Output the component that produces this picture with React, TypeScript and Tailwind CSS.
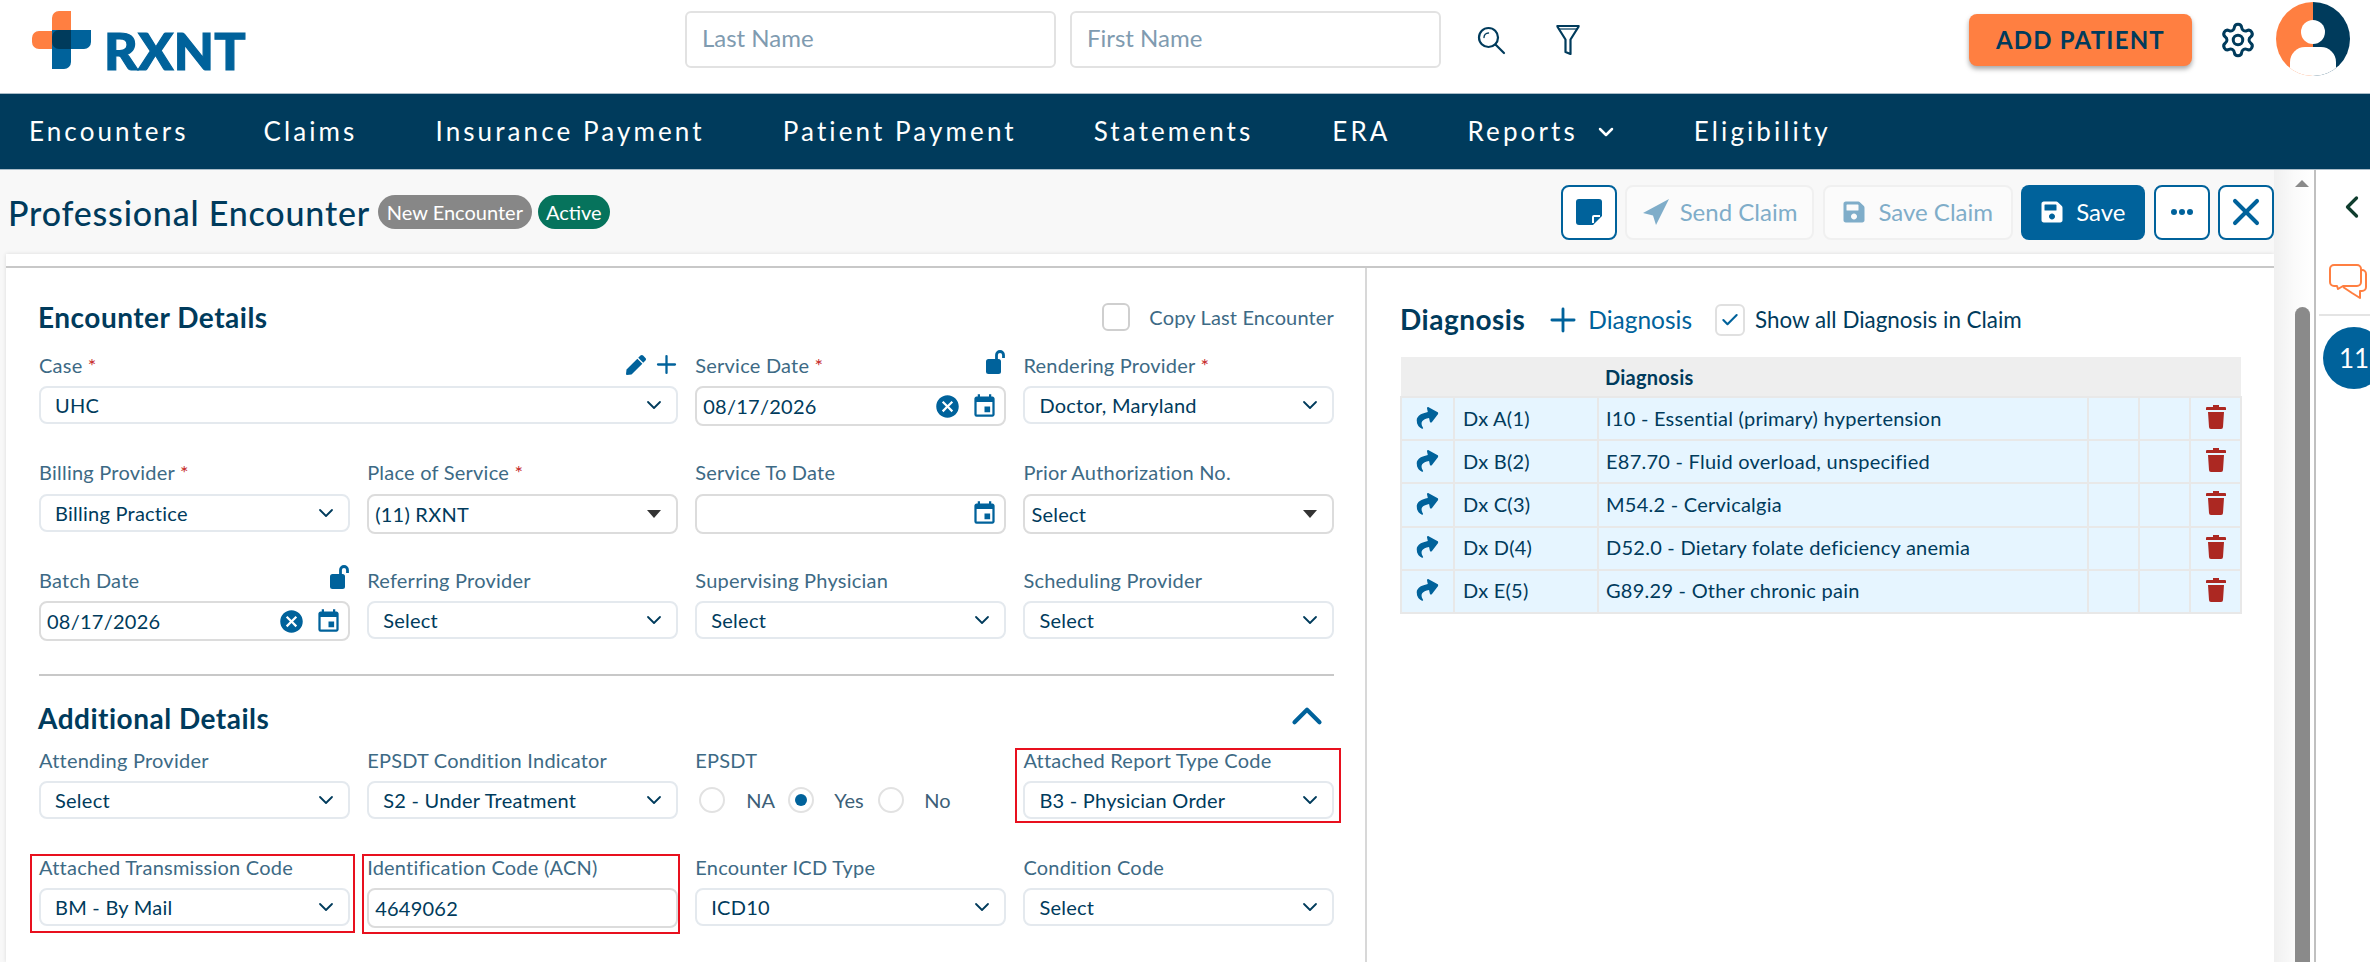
import React from "react";
import { ChevronDown, ChevronUp, ChevronLeft, Plus, X, Settings, Check } from "lucide-react";
import { FaPen, FaShare, FaSave } from "react-icons/fa";
import { MdCancel, MdEvent } from "react-icons/md";

const Logo = () => (
  <div className="flex items-end gap-[13px] h-[58px]">
    <svg width="59" height="58" viewBox="0 0 59 58" className="shrink-0">
      <path d="M27 0h12v38H7a7 7 0 0 1-7-7V27a7 7 0 0 1 7-7h13V7a7 7 0 0 1 7-7z" fill="#ff7f41" />
      <path d="M20 19h39v12a7 7 0 0 1-7 7H39v13a7 7 0 0 1-7 7H20z" fill="#00629b" />
      <path d="M27 19h12v19H27a7 7 0 0 1-7-7V26a7 7 0 0 1 7-7z" fill="#003b5c" />
    </svg>
    <span className="font-['Lato',sans-serif] font-black text-[52px] leading-[38px] h-[38px] text-[#00629b] tracking-[0.3px] [-webkit-text-stroke:1.2px_#00629b]">RXNT</span>
  </div>
);

const Avatar = () => (
  <svg width="74" height="74" viewBox="0 0 74 74">
    <defs>
      <clipPath id="av"><circle cx="37" cy="37" r="37" /></clipPath>
    </defs>
    <g clipPath="url(#av)">
      <rect width="37" height="74" fill="#ff7f41" />
      <rect x="37" width="37" height="74" fill="#003b5c" />
      <circle cx="37" cy="30" r="12" fill="#fff" />
      <path d="M14 74V60a15 15 0 0 1 15-15h16a15 15 0 0 1 15 15v14z" fill="#fff" />
    </g>
  </svg>
);

const SearchIcon = () => (
  <svg width="30" height="30" viewBox="0 0 30 30" fill="none" stroke="#003b5c" strokeWidth="2.2" strokeLinecap="round">
    <circle cx="12.5" cy="12.5" r="9.5" />
    <path d="M19.5 19.5L28 28" />
    <path d="M8 12.5a4.5 4.5 0 0 1 4.5-4.5" strokeWidth="1.4" />
  </svg>
);

const FilterIcon = () => (
  <svg width="26" height="31" viewBox="0 0 26 31" fill="none" stroke="#003b5c" strokeWidth="2.2" strokeLinejoin="round">
    <path d="M1.5 2h23M2 2l8.5 13.5V28l5 2V15.5L24 2" />
    <path d="M3.5 5h19" strokeWidth="1.2" />
  </svg>
);

const SendIcon = ({ c }: { c: string }) => (
  <svg width="28" height="28" viewBox="0 0 28 28">
    <path d="M27 1L1 15l10 2.5L14 27 z" fill={c} />
  </svg>
);

const NoteIcon = () => (
  <svg width="26" height="26" viewBox="0 0 26 26">
    <path d="M3 0h20a3 3 0 0 1 3 3v14l-9 9H3a3 3 0 0 1-3-3V3a3 3 0 0 1 3-3z" fill="#00629b" />
    <path d="M17 24v-6a1 1 0 0 1 1-1h6" fill="none" stroke="#fff" strokeWidth="2" />
  </svg>
);

const LockIcon = () => (
  <svg width="20" height="25" viewBox="0 0 20 25" className="-mt-[6px]">
    <rect x="0" y="10" width="15" height="15" rx="2.5" fill="#00629b" />
    <path d="M10.5 11V6a3.5 3.5 0 0 1 7 0v3" fill="none" stroke="#00629b" strokeWidth="2.8" />
  </svg>
);

const TrashIcon = () => (
  <svg width="20" height="24" viewBox="0 0 20 24" fill="#ac2822">
    <path d="M7 0h6v2h6a1 1 0 0 1 1 1v2H0V3a1 1 0 0 1 1-1h6z" />
    <path d="M2 7h16l-1 15a2 2 0 0 1-2 2H5a2 2 0 0 1-2-2z" />
  </svg>
);

const ChatIcon = () => (
  <svg width="38" height="35" viewBox="0 0 38 35" fill="none" stroke="#ff7f41" strokeWidth="2" strokeLinejoin="round">
    <path d="M5 1h23a4 4 0 0 1 4 4v13a4 4 0 0 1-4 4H14l-5 3-1-3H5a4 4 0 0 1-4-4V5a4 4 0 0 1 4-4z" />
    <path d="M32 6h1a4 4 0 0 1 4 4v13a4 4 0 0 1-4 4h-2v7l-8-5-9-6" />
  </svg>
);

type FieldProps = {
  label: string;
  req?: boolean;
  kind?: "select" | "native" | "date" | "text" | "radio";
  value?: string;
  clear?: boolean;
  span?: boolean;
  extra?: React.ReactNode;
  red?: string;
};

const Field = ({ label, req, kind = "select", value = "", clear, span, extra, red }: FieldProps) => {
  const hard = kind === "select" ? "h-[38px] border-[#e4e9ee] pl-[14px]" : "h-[40px] border-[#dcdcdc] pl-[6px]";
  return (
    <div className={`relative ${span ? "col-span-2" : ""}`}>
      {red && <div className={`absolute border-2 border-[#e8101e] pointer-events-none ${red}`} />}
      <div className="flex items-center justify-between h-[35px] pb-[8px]">
        <span className="text-[20px] text-[#3d6a85] tracking-[0.23px]">
          {label}
          {req && <span className="text-[#c62828]"> *</span>}
        </span>
        {extra}
      </div>
      {kind === "radio" ? (
        <div className="flex items-center h-[38px] pl-[4px] text-[20px] text-[#3d5f78]">
          <span className="w-[26px] h-[26px] rounded-full border-2 border-[#e2e2e2]" />
          <span className="ml-[21px] w-[42px]">NA</span>
          <span className="w-[26px] h-[26px] rounded-full border-2 border-[#e2e2e2] flex items-center justify-center">
            <span className="w-[12px] h-[12px] rounded-full bg-[#00629b]" />
          </span>
          <span className="ml-[20px] w-[44px]">Yes</span>
          <span className="w-[26px] h-[26px] rounded-full border-2 border-[#e2e2e2]" />
          <span className="ml-[20px]">No</span>
        </div>
      ) : (
        <div className={`flex items-center bg-white border-2 rounded-lg text-[20px] tracking-[0.25px] text-[#003b5c] pr-[10px] ${hard}`}>
          <span className="flex-1 truncate">{value}</span>
          {kind === "select" && <ChevronDown size={24} strokeWidth={1.8} color="#003b5c" />}
          {kind === "native" && (
            <span className="mr-[5px] w-0 h-0 border-x-[7px] border-x-transparent border-t-[8px] border-t-[#333]" />
          )}
          {kind === "date" && (
            <span className="flex items-center gap-[10px] -mr-[4px]">
              {clear && <MdCancel size={27} color="#00629b" />}
              <MdEvent size={27} color="#00629b" />
            </span>
          )}
        </div>
      )}
    </div>
  );
};

const dx = [
  ["Dx A(1)", "I10 - Essential (primary) hypertension"],
  ["Dx B(2)", "E87.70 - Fluid overload, unspecified"],
  ["Dx C(3)", "M54.2 - Cervicalgia"],
  ["Dx D(4)", "D52.0 - Dietary folate deficiency anemia"],
  ["Dx E(5)", "G89.29 - Other chronic pain"],
];

const navItems = [
  ["Encounters", "ml-[29px]"],
  ["Claims", "ml-[75px]"],
  ["Insurance Payment", "ml-[78px]"],
  ["Patient Payment", "ml-[78px]"],
  ["Statements", "ml-[77px]"],
  ["ERA", "ml-[79px]"],
];

const topInput = "w-[371px] h-[57px] rounded-md border-2 border-[#e2e2e2] pl-[15px] pb-[3px] flex items-center text-[24px] text-[#7f9bb0]";
const ghostBtn = "h-[55px] rounded-lg border-2 border-[#f0f0f0] bg-[#fbfbfb] flex items-center text-[24px] text-[#7fadc9]";
const outlineBtn = "w-[56px] h-[55px] rounded-lg border-2 border-[#00629b] bg-white flex items-center justify-center";

export default function App() {
  return (
    <div className="w-[2370px] h-[962px] overflow-hidden flex flex-col bg-white font-['Lato',sans-serif]">
      <header className="h-[93px] shrink-0 flex items-center relative">
        <div className="ml-[32px] -mt-[14px]"><Logo /></div>
        <div className="ml-[439px] -mt-[14px] flex items-center">
          <div className={topInput}>Last Name</div>
          <div className={`${topInput} ml-[14px]`}>First Name</div>
          <div className="ml-[35px]"><SearchIcon /></div>
          <div className="ml-[49px]"><FilterIcon /></div>
          <button className="ml-[388px] w-[223px] h-[52px] rounded-lg bg-[#ff7f41] shadow-[0_3px_5px_rgba(0,0,0,0.35)] text-[24px] font-bold tracking-[1.2px] text-[#003b5c]">
            ADD PATIENT
          </button>
          <Settings size={38} color="#003b5c" strokeWidth={1.9} className="ml-[27px]" />
          <div className="ml-[19px] -mt-[1px]"><Avatar /></div>
        </div>
      </header>

      <nav className="h-[77px] shrink-0 bg-[#003b5c] flex items-center text-[26px] text-white tracking-[3.1px] border-y border-[#a9bcc8]">
        {navItems.map(([t, m]) => (
          <span key={t} className={m}>{t}</span>
        ))}
        <span className="ml-[77px] flex items-center">
          Reports
          <ChevronDown size={24} strokeWidth={2.5} className="ml-[16px]" />
        </span>
        <span className="ml-[76px]">Eligibility</span>
      </nav>

      <div className="flex-1 flex min-h-0">
        <main className="w-[2274px] shrink-0 flex flex-col bg-[#f8f8f8] min-h-0">
          <div className="h-[84px] shrink-0 flex items-center pl-[8px]">
            <h1 className="w-[363px] shrink-0 text-[34px] text-[#003b5c] tracking-[0.8px] font-medium whitespace-nowrap">Professional Encounter</h1>
            <span className="ml-[7px] h-[34px] w-[154px] rounded-full bg-[#878787] text-white text-[20px] flex items-center justify-center">New Encounter</span>
            <span className="ml-[6px] h-[34px] w-[72px] rounded-full bg-[#06735c] text-white text-[20px] flex items-center justify-center">Active</span>
            <div className={`${outlineBtn} ml-[951px]`}><NoteIcon /></div>
            <div className={`${ghostBtn} ml-[8px] w-[190px] pl-[15px] gap-[10px]`}><SendIcon c="#7fadc9" />Send Claim</div>
            <div className={`${ghostBtn} ml-[9px] w-[190px] pl-[17px] gap-[12px]`}><FaSave size={24} />Save Claim</div>
            <div className="ml-[8px] w-[124px] h-[55px] rounded-lg bg-[#00629b] flex items-center pl-[19px] gap-[12px] text-[24px] text-white"><FaSave size={24} />Save</div>
            <div className={`${outlineBtn} ml-[9px]`}>
              <span className="flex gap-[2px]">
                <span className="w-[6px] h-[6px] rounded-full bg-[#00629b]" />
                <span className="w-[6px] h-[6px] rounded-full bg-[#00629b]" />
                <span className="w-[6px] h-[6px] rounded-full bg-[#00629b]" />
              </span>
            </div>
            <div className={`${outlineBtn} ml-[8px]`}><X size={44} color="#00629b" strokeWidth={2.2} /></div>
          </div>

          <div className="flex-1 min-h-0 ml-[6px] bg-white pt-[12px] shadow-[0_0_4px_rgba(0,0,0,0.12)]">
            <div className="h-full border-t-2 border-[#c8c8c8] flex">
              <section className="w-[1361px] shrink-0 border-r-2 border-[#d8d8d8] pl-[33px] pr-[31px] pt-[34px]">
                <div className="flex items-center justify-between h-[30px] mb-[19px]">
                  <h2 className="text-[28px] font-bold tracking-[0.5px] text-[#003b5c] -ml-[1px]">Encounter Details</h2>
                  <div className="flex items-center gap-[19px] text-[20px] tracking-[0.15px] text-[#3d6a85]">
                    <span className="w-[28px] h-[28px] rounded-md border-2 border-[#cfcfcf]" />
                    Copy Last Encounter
                  </div>
                </div>

                <div className="grid grid-cols-4 gap-x-[17.5px] gap-y-[32.5px]">
                  <Field
                    label="Case"
                    req
                    span
                    value="UHC"
                    extra={
                      <span className="flex items-center gap-[6px] -mr-[3px]">
                        <FaPen size={20} color="#00629b" />
                        <Plus size={29} color="#00629b" strokeWidth={1.9} />
                      </span>
                    }
                  />
                  <Field label="Service Date" req kind="date" value="08/17/2026" clear extra={<LockIcon />} />
                  <Field label="Rendering Provider" req value="Doctor, Maryland" />
                  <Field label="Billing Provider" req value="Billing Practice" />
                  <Field label="Place of Service" req kind="native" value="(11) RXNT" />
                  <Field label="Service To Date" kind="date" />
                  <Field label="Prior Authorization No." kind="native" value="Select" />
                  <Field label="Batch Date" kind="date" value="08/17/2026" clear extra={<LockIcon />} />
                  <Field label="Referring Provider" value="Select" />
                  <Field label="Supervising Physician" value="Select" />
                  <Field label="Scheduling Provider" value="Select" />
                </div>

                <div className="mt-[33px] border-t-2 border-[#c8c8c8]" />

                <div className="flex items-center justify-between h-[30px] mt-[27px] mb-[13px]">
                  <h2 className="text-[28px] font-bold tracking-[0.5px] text-[#003b5c] -ml-[1px]">Additional Details</h2>
                  <ChevronUp size={50} color="#00629b" strokeWidth={2} className="mr-[2px] -mt-[4px] shrink-0" />
                </div>

                <div className="grid grid-cols-4 gap-x-[17.5px] gap-y-[34px]">
                  <Field label="Attending Provider" value="Select" />
                  <Field label="EPSDT Condition Indicator" value="S2 - Under Treatment" />
                  <Field label="EPSDT" kind="radio" />
                  <Field label="Attached Report Type Code" value="B3 - Physician Order" red="-left-[8px] -right-[7px] top-[2px] -bottom-[4px]" />
                  <Field label="Attached Transmission Code" value="BM - By Mail" red="-left-[9px] -right-[5px] top-[1px] -bottom-[5px]" />
                  <Field label="Identification Code (ACN)" kind="text" value="4649062" red="-left-[5px] -right-[2px] top-[1px] -bottom-[6px]" />
                  <Field label="Encounter ICD Type" value="ICD10" />
                  <Field label="Condition Code" value="Select" />
                </div>
              </section>

              <section className="flex-1 pl-[33px] pr-[30px] pt-[36px]">
                <div className="flex items-center h-[32px]">
                  <h2 className="text-[28px] font-bold tracking-[0.5px] text-[#003b5c] pb-[3px]">Diagnosis</h2>
                  <Plus size={38} color="#00629b" strokeWidth={1.8} className="ml-[19px]" />
                  <span className="ml-[6px] text-[24.5px] text-[#00629b]">Diagnosis</span>
                  <span className="ml-[23px] w-[30px] h-[32px] rounded-md border-2 border-[#e0e0e0] flex items-center justify-center">
                    <Check size={20} color="#00629b" strokeWidth={2.5} />
                  </span>
                  <span className="ml-[10px] text-[22.4px] text-[#003b5c]">Show all Diagnosis in Claim</span>
                </div>
                <table className="mt-[21px] w-[840px] table-fixed border-collapse text-[20px] tracking-[0.25px] text-[#003b5c]">
                  <colgroup>
                    <col className="w-[53px]" />
                    <col className="w-[144px]" />
                    <col className="w-[490px]" />
                    <col className="w-[51px]" />
                    <col className="w-[51px]" />
                    <col className="w-[51px]" />
                  </colgroup>
                  <thead>
                    <tr className="h-[40px] bg-[#eeeeee]">
                      <th />
                      <th />
                      <th className="text-left font-bold pl-[7px]">Diagnosis</th>
                      <th />
                      <th />
                      <th />
                    </tr>
                  </thead>
                  <tbody>
                    {dx.map(([a, b]) => (
                      <tr key={a} className="h-[43.2px] bg-[#e6f5ff]">
                        <td className="border-2 border-[#e8e8e8] pb-[3px]"><FaShare size={23} color="#00629b" className="mx-auto -rotate-12" /></td>
                        <td className="border-2 border-[#e8e8e8] pl-[8px] pb-[2px]">{a}</td>
                        <td className="border-2 border-[#e8e8e8] pl-[7px] pb-[2px]">{b}</td>
                        <td className="border-2 border-[#e8e8e8]" />
                        <td className="border-2 border-[#e8e8e8]" />
                        <td className="border-2 border-[#e8e8e8] pb-[3px]"><div className="flex justify-center"><TrashIcon /></div></td>
                      </tr>
                    ))}
                  </tbody>
                </table>
              </section>
            </div>
          </div>
        </main>

        <div className="w-[42px] shrink-0 bg-gradient-to-r from-[#f0f0f0] via-[#fafafa] to-white border-r-2 border-[#c0c0c0] flex flex-col pl-[21px]">
          <span className="mt-[10px] w-0 h-0 border-x-[7.5px] border-x-transparent border-b-[7px] border-b-[#8a8a8a]" />
          <div className="mt-[120px] flex-1 w-[15px] rounded-t-full bg-[#8a8a8a]" />
        </div>

        <aside className="flex-1 min-w-0 relative overflow-hidden flex flex-col">
          <div className="pl-[18px] pt-[19px] h-[79px]"><ChevronLeft size={36} color="#0f3d2e" strokeWidth={2.2} /></div>
          <div className="pl-[10px] pt-[15px] h-[67px] border-b-2 border-[#e4e4e4] ml-[3px]"><ChatIcon /></div>
          <div className="mt-[11px] ml-[7px] w-[62px] h-[62px] shrink-0 rounded-full bg-[#00629b] flex items-center justify-center text-white text-[26px]">11</div>
        </aside>
      </div>
    </div>
  );
}
